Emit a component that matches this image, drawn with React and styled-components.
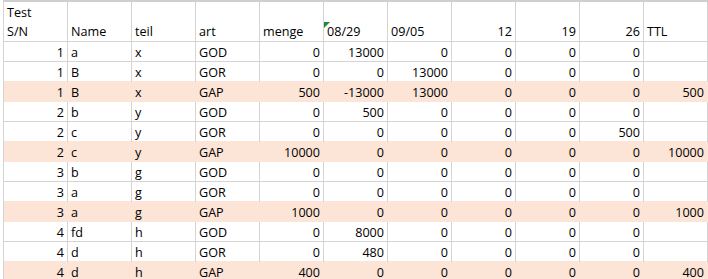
import styled, { createGlobalStyle } from "styled-components";

const GlobalStyle = createGlobalStyle`
  body {
    margin: 0;
    background: #fff;
    font-family: "Open Sans", "Liberation Sans", sans-serif;
    font-size: 12.6px;
    color: #000;
  }
`;

const grid = "#d4d4d4";
const peach = "#fce4d6";

const Sheet = styled.div`
  margin-left: 3px;
  border-left: 1px solid ${grid};
  border-top: 2px solid #cfcfcf;
  width: 704px;
  overflow: hidden;
`;

const Row = styled.div`
  display: grid;
  grid-template-columns: repeat(11, 64px);
  height: ${(p) => p.$height || 20}px;
  background: ${(p) => (p.$hl ? peach : "#fff")};
  border-top: ${(p) => (p.$lined ? `1px solid ${p.$topColor || grid}` : "none")};
  box-sizing: border-box;
`;

const Cell = styled.div`
  position: relative;
  box-sizing: border-box;
  border-right: 1px solid ${(p) => (p.$hl ? peach : grid)};
  padding: 0 3px 0 3px;
  line-height: ${(p) => p.$lh || 21}px;
  text-align: ${(p) => (p.$right ? "right" : "left")};
  white-space: nowrap;
`;

// little green note marker excel puts in a cell corner
const Marker = styled.span`
  position: absolute;
  left: 0;
  top: 1px;
  width: 0;
  height: 0;
  border-top: 6px solid #1e8a3e;
  border-right: 6px solid transparent;
`;

const header = ["S/N", "Name", "teil", "art", "menge", "08/29", "09/05", "12", "19", "26", "TTL"];
const headerRight = [false, false, false, false, false, false, false, true, true, true, false];

const rows = [
  [1, "a", "x", "GOD", 0, 13000, 0, 0, 0, 0, ""],
  [1, "B", "x", "GOR", 0, 0, 13000, 0, 0, 0, ""],
  [1, "B", "x", "GAP", 500, -13000, 13000, 0, 0, 0, 500],
  [2, "b", "y", "GOD", 0, 500, 0, 0, 0, 0, ""],
  [2, "c", "y", "GOR", 0, 0, 0, 0, 0, 500, ""],
  [2, "c", "y", "GAP", 10000, 0, 0, 0, 0, 0, 10000],
  [3, "b", "g", "GOD", 0, 0, 0, 0, 0, 0, ""],
  [3, "a", "g", "GOR", 0, 0, 0, 0, 0, 0, ""],
  [3, "a", "g", "GAP", 1000, 0, 0, 0, 0, 0, 1000],
  [4, "fd", "h", "GOD", 0, 8000, 0, 0, 0, 0, ""],
  [4, "d", "h", "GOR", 0, 480, 0, 0, 0, 0, ""],
  [4, "d", "h", "GAP", 400, 0, 0, 0, 0, 0, 400],
];

function App() {
  return (
    <>
      <GlobalStyle />
      <Sheet>
        <Row $height={19}>
          <Cell $lh={21}>Test</Cell>
          {Array.from({ length: 10 }).map((_, i) => (
            <Cell key={i} $lh={21} />
          ))}
        </Row>
        <Row $height={20}>
          {header.map((h, i) => (
            <Cell key={i} $lh={22} $right={headerRight[i]}>
              {i === 5 && <Marker />}
              {h}
            </Cell>
          ))}
        </Row>
        {rows.map((r, ri) => {
          const hl = r[3] === "GAP";
          const prevHl = ri > 0 && rows[ri - 1][3] === "GAP";
          return (
            <Row key={ri} $lined $hl={hl} $topColor={hl || prevHl ? peach : grid}>
              {r.map((v, ci) => (
                <Cell key={ci} $hl={hl} $right={typeof v === "number"}>
                  {v}
                </Cell>
              ))}
            </Row>
          );
        })}
      </Sheet>
    </>
  );
}

export default App;
